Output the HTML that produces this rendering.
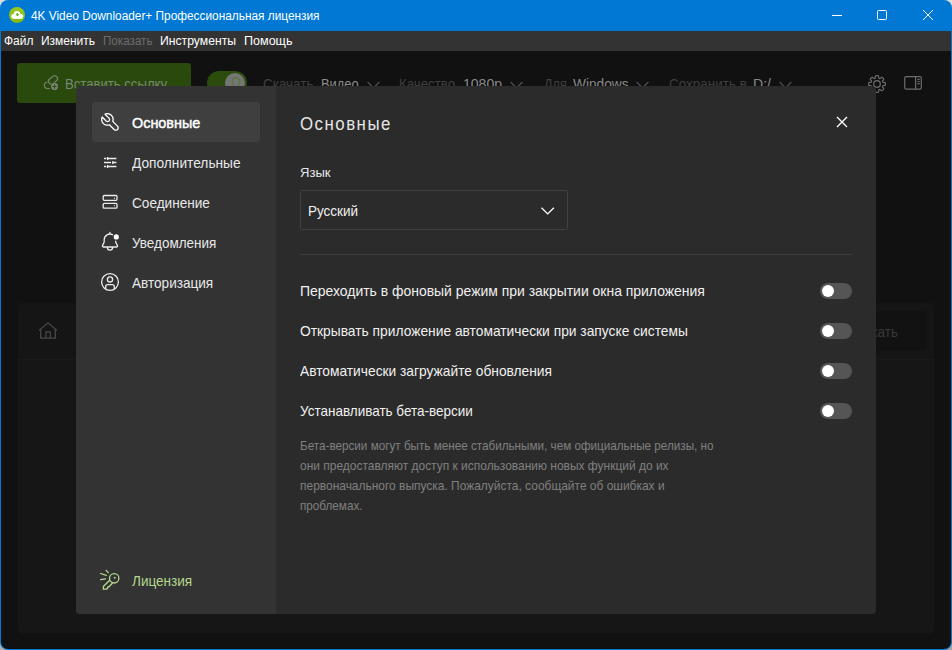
<!DOCTYPE html>
<html lang="ru">
<head>
<meta charset="utf-8">
<title>4K Video Downloader+</title>
<style>
*{box-sizing:border-box;margin:0;padding:0}
html,body{width:952px;height:650px;overflow:hidden;background:#c4c4c4}
body{font-family:"Liberation Sans",sans-serif;position:relative;color:#fff}
.abs{position:absolute}
.t{position:absolute;white-space:nowrap;line-height:1;transform-origin:0 50%}
#win{position:absolute;left:0;top:0;width:952px;height:650px;background:#0078d4;border-radius:8px;overflow:hidden}
#client{position:absolute;left:1px;top:31px;width:950px;height:618px;background:#111;border-radius:0 0 7px 7px;overflow:hidden}
#menubar{position:absolute;left:0;top:0;width:950px;height:20px;background:#333}
#panel{position:absolute;left:17px;top:272px;width:916px;height:330px;background:#161616;border-radius:3px}
#panelhead{position:absolute;left:0;top:0;width:916px;height:57px;background:#151515;border-bottom:1px solid #1a1a1a;border-radius:3px 3px 0 0}
#dialog{z-index:2;position:absolute;left:76px;top:86px;width:800px;height:528px;background:#2b2b2b;border-radius:4px;overflow:hidden}
#side{position:absolute;left:0;top:0;width:200px;height:528px;background:#333}
#sel{position:absolute;left:16px;top:16px;width:168px;height:40px;background:#3f3f3f;border-radius:3px}
.tog{position:absolute;left:744px;width:32px;height:16px;border-radius:8px;background:#555}
.tog i{position:absolute;left:2px;top:2px;width:12px;height:12px;border-radius:6px;background:#fff}
svg{position:absolute;overflow:visible}
.ic{fill:none;stroke:#ececec;stroke-width:1.3;stroke-linecap:round;stroke-linejoin:round}
.dim{fill:none;stroke:#6c6c6c;stroke-width:1.2;stroke-linecap:round;stroke-linejoin:round}
.chev{fill:none;stroke:#505050;stroke-width:1.2}
</style>
</head>
<body>
<div class="abs" style="left:0;top:0;width:10px;height:10px;background:#dcdcdc"></div><div class="abs" style="left:942px;top:0;width:10px;height:10px;background:#e4e0d6"></div><div class="abs" style="left:0;top:640px;width:10px;height:10px;background:#b2b2b2"></div><div class="abs" style="left:942px;top:640px;width:10px;height:10px;background:#a6a6a6"></div>
<div id="win">
  <!-- title bar -->
  <svg style="left:9px;top:7px" width="16" height="16" viewBox="0 0 16 16"><defs><linearGradient id="gi" x1="0" y1="0" x2="0" y2="1"><stop offset="0" stop-color="#9dcc1a"/><stop offset="1" stop-color="#80b616"/></linearGradient></defs><circle cx="8" cy="8" r="8" fill="url(#gi)"/><g fill="#fff"><circle cx="4.600" cy="9.400" r="2.450"/><circle cx="8" cy="7.300" r="3.250"/><circle cx="11.600" cy="9.300" r="2.550"/><rect x="4.600" y="9" width="7" height="2.850"/></g><path d="M8.400 6.100v3M6.900 7.600h3" stroke="#6fb51e" stroke-width="1.200" fill="none"/></svg>
  <svg style="left:832px;top:10px" width="11" height="11" viewBox="0 0 11 11"><path d="M0 5.500h10" stroke="#fff" stroke-width="1" fill="none"/></svg>
  <svg style="left:877px;top:10px" width="11" height="11" viewBox="0 0 11 11"><rect x="0.500" y="0.500" width="9" height="9" rx="1" fill="none" stroke="#fff" stroke-width="1"/></svg>
  <svg style="left:923px;top:10px" width="11" height="11" viewBox="0 0 11 11"><path d="M0 0l10 10M10 0L0 10" stroke="#fff" stroke-width="1" fill="none"/></svg>

  <div id="client">
    <div id="menubar"></div>
    <!-- toolbar (dimmed) -->
    <div class="abs" style="left:16px;top:32px;width:174px;height:40px;background:#2a490c;border-radius:3px"></div>
    <div class="abs" style="left:206px;top:40px;width:40px;height:24px;border-radius:12px;background:#2b4c0d"></div>
    <div class="abs" style="left:224px;top:42px;width:20px;height:20px;border-radius:10px;background:#757575"></div>
    <!-- content panel -->
    <div id="panel">
      <div id="panelhead"></div>
      <div class="abs" style="left:810px;top:8px;width:99px;height:40px;background:#121212;border-radius:3px"></div>
    </div>
  </div>

  <!-- background icons (page coords) -->
  <svg style="left:36px;top:66px" width="40" height="30" viewBox="0 0 40 30"><g fill="none" stroke="#74816b" stroke-width="1.200" stroke-linecap="round"><rect x="12" y="11.100" width="10" height="5.600" rx="2.800" transform="rotate(-38 17 13.900)"/><path d="M11 16C8.500 16.500 7.400 19.500 9 21.500C10.200 22.900 12 22.900 13.400 22.600"/></g><circle cx="18.500" cy="20.500" r="3.900" fill="#2a490c"/><circle cx="18.500" cy="20.500" r="3.400" fill="#84887f"/><path d="M18.500 18.300v4.400M16.300 20.500h4.400" stroke="#2a490c" stroke-width="1.200" fill="none"/></svg>
  <svg style="left:229px;top:76px" width="14" height="16" viewBox="0 0 14 16" fill="none" stroke="#537a30" stroke-width="1.100"><path d="M7 1.500a3.900 3.900 0 0 0-3 6.400L5.300 11h3.400L10 7.900A3.900 3.900 0 0 0 7 1.500z"/></svg>
  <svg style="left:367px;top:80.500px" width="14" height="9" viewBox="0 0 14 9" class="chev"><path d="M.600 1l5.900 5.900L12.400 1"/></svg>
  <svg style="left:510px;top:80.500px" width="14" height="9" viewBox="0 0 14 9" class="chev"><path d="M.600 1l5.900 5.900L12.400 1"/></svg>
  <svg style="left:636px;top:80.500px" width="14" height="9" viewBox="0 0 14 9" class="chev"><path d="M.600 1l5.900 5.900L12.400 1"/></svg>
  <svg style="left:779px;top:80.500px" width="14" height="9" viewBox="0 0 14 9" class="chev"><path d="M.600 1l5.900 5.900L12.400 1"/></svg>
  <svg style="left:876.700px;top:83.800px" width="1" height="1" viewBox="0 0 1 1" class="dim"><path d="M0.00 8.40L-0.26 8.39L-0.53 8.37L-0.79 8.35L-1.05 8.29L-1.29 8.17L-1.50 7.88L-1.63 7.30L-1.69 6.57L-1.76 6.06L-1.88 5.80L-2.04 5.66L-2.20 5.57L-2.38 5.49L-2.56 5.44L-2.77 5.43L-3.04 5.53L-3.45 5.84L-4.01 6.32L-4.51 6.64L-4.86 6.69L-5.12 6.60L-5.34 6.46L-5.55 6.29L-5.75 6.12L-5.94 5.94L-6.12 5.75L-6.29 5.55L-6.46 5.34L-6.60 5.12L-6.69 4.86L-6.64 4.51L-6.32 4.01L-5.84 3.45L-5.53 3.04L-5.43 2.77L-5.44 2.56L-5.49 2.38L-5.57 2.20L-5.66 2.04L-5.80 1.88L-6.06 1.76L-6.57 1.69L-7.30 1.63L-7.88 1.50L-8.17 1.29L-8.29 1.05L-8.35 0.79L-8.37 0.53L-8.39 0.26L-8.40 0.00L-8.39 -0.26L-8.37 -0.53L-8.35 -0.79L-8.29 -1.05L-8.17 -1.29L-7.88 -1.50L-7.30 -1.63L-6.57 -1.69L-6.06 -1.76L-5.80 -1.88L-5.66 -2.04L-5.57 -2.20L-5.49 -2.38L-5.44 -2.56L-5.43 -2.77L-5.53 -3.04L-5.84 -3.45L-6.32 -4.01L-6.64 -4.51L-6.69 -4.86L-6.60 -5.12L-6.46 -5.34L-6.29 -5.55L-6.12 -5.75L-5.94 -5.94L-5.75 -6.12L-5.55 -6.29L-5.34 -6.46L-5.12 -6.60L-4.86 -6.69L-4.51 -6.64L-4.01 -6.32L-3.45 -5.84L-3.04 -5.53L-2.77 -5.43L-2.56 -5.44L-2.38 -5.49L-2.20 -5.57L-2.04 -5.66L-1.88 -5.80L-1.76 -6.06L-1.69 -6.57L-1.63 -7.30L-1.50 -7.88L-1.29 -8.17L-1.05 -8.29L-0.79 -8.35L-0.53 -8.37L-0.26 -8.39L-0.00 -8.40L0.26 -8.39L0.53 -8.37L0.79 -8.35L1.05 -8.29L1.29 -8.17L1.50 -7.88L1.63 -7.30L1.69 -6.57L1.76 -6.06L1.88 -5.80L2.04 -5.66L2.20 -5.57L2.38 -5.49L2.56 -5.44L2.77 -5.43L3.04 -5.53L3.45 -5.84L4.01 -6.32L4.51 -6.64L4.86 -6.69L5.12 -6.60L5.34 -6.46L5.55 -6.29L5.75 -6.12L5.94 -5.94L6.12 -5.75L6.29 -5.55L6.46 -5.34L6.60 -5.12L6.69 -4.86L6.64 -4.51L6.32 -4.01L5.84 -3.45L5.53 -3.04L5.43 -2.77L5.44 -2.56L5.49 -2.38L5.57 -2.20L5.66 -2.04L5.80 -1.88L6.06 -1.76L6.57 -1.69L7.30 -1.63L7.88 -1.50L8.17 -1.29L8.29 -1.05L8.35 -0.79L8.37 -0.53L8.39 -0.26L8.40 -0.00L8.39 0.26L8.37 0.53L8.35 0.79L8.29 1.05L8.17 1.29L7.88 1.50L7.30 1.63L6.57 1.69L6.06 1.76L5.80 1.88L5.66 2.04L5.57 2.20L5.49 2.38L5.44 2.56L5.43 2.77L5.53 3.04L5.84 3.45L6.32 4.01L6.64 4.51L6.69 4.86L6.60 5.12L6.46 5.34L6.29 5.55L6.12 5.75L5.94 5.94L5.75 6.12L5.55 6.29L5.34 6.46L5.12 6.60L4.86 6.69L4.51 6.64L4.01 6.32L3.45 5.84L3.04 5.53L2.77 5.43L2.56 5.44L2.38 5.49L2.20 5.57L2.04 5.66L1.88 5.80L1.76 6.06L1.69 6.57L1.63 7.30L1.50 7.88L1.29 8.17L1.05 8.29L0.79 8.35L0.53 8.37L0.26 8.39Z"/><circle cx="0" cy="0" r="3.300"/></svg>
  <svg style="left:904px;top:76px" width="18" height="14" viewBox="0 0 18 14" class="dim"><rect x=".700" y=".600" width="16.600" height="12.600" rx="1.600"/><path d="M11.600 .600v12.600M13.400 3.400h2.300M13.400 5.500h2.300M13.400 7.600h2.300" stroke-linecap="butt"/></svg>
  <svg style="left:0;top:0" width="100" height="400" viewBox="0 0 100 400" fill="none" stroke="#4a4a4a" stroke-width="1.200" stroke-linecap="round" stroke-linejoin="round"><path d="M39.500 330L48 322.900L56.500 330M40.700 329.200V338.200H55.300V329.200M45.900 338.200V331.900H50.300V338.200"/></svg>

<div class="t" id="b1" style="left:65px;top:76px;font-size:15px;color:#7a8774;z-index:1;transform:scaleX(0.8754)">Вставить ссылку</div>
<div class="t" id="c1" style="left:263.3px;top:76px;font-size:15px;color:#3f3f3f;z-index:1;transform:scaleX(0.8960)">Скачать</div>
<div class="t" id="c2" style="left:321px;top:76px;font-size:15px;color:#8a8a8a;z-index:1;transform:scaleX(0.8602)">Видео</div>
<div class="t" id="c3" style="left:399.4px;top:76px;font-size:15px;color:#3f3f3f;z-index:1;transform:scaleX(0.8846)">Качество</div>
<div class="t" id="c4" style="left:463px;top:76px;font-size:15px;color:#8a8a8a;z-index:1;transform:scaleX(0.9348)">1080p</div>
<div class="t" id="c5" style="left:543.7px;top:76px;font-size:15px;color:#3f3f3f;z-index:1;transform:scaleX(0.8430)">Для</div>
<div class="t" id="c6" style="left:572.6px;top:76px;font-size:15px;color:#8a8a8a;z-index:1;transform:scaleX(0.9136)">Windows</div>
<div class="t" id="c7" style="left:668.6px;top:76px;font-size:15px;color:#3f3f3f;z-index:1;transform:scaleX(0.8975)">Сохранить в</div>
<div class="t" id="c8" style="left:753px;top:76px;font-size:15px;color:#8a8a8a;z-index:1;transform:scaleX(0.9389)">D:/</div>
<div class="t" id="srch" style="left:855px;top:324px;font-size:15px;color:#393939;z-index:1;transform:scaleX(0.8982)">Искать</div>

  <!-- settings dialog -->
  <div id="dialog">
    <div id="side"><div id="sel"></div></div>
    <div class="abs" style="left:224px;top:104px;width:268px;height:40px;border:1px solid #404040;border-radius:2px"></div>
    <div class="abs" style="left:224px;top:168px;width:552px;height:1px;background:#3e3e3e"></div>
    <div class="tog" style="top:197px"><i></i></div>
    <div class="tog" style="top:237px"><i></i></div>
    <div class="tog" style="top:277px"><i></i></div>
    <div class="tog" style="top:317px"><i></i></div>
  </div>

  <!-- dialog icons (page coords), above dialog -->
  <div class="abs" style="z-index:3;left:0;top:0">
  <svg style="left:96px;top:108px" width="30" height="28" viewBox="0 0 30 28" class="ic" stroke="#fff"><path d="M9.04 6.21L12.96 10.13L13.27 10.54L13.47 11.02L13.54 11.54L13.47 12.06L13.27 12.54L12.96 12.96L12.54 13.27L12.06 13.47L11.54 13.54L11.02 13.47L10.54 13.27L10.13 12.96L6.21 9.04L6.01 9.56L5.85 10.09L5.75 10.64L5.70 11.20L5.71 11.76L5.77 12.31L5.89 12.85L6.06 13.39L6.28 13.90L6.55 14.39L6.86 14.85L7.22 15.27L7.62 15.66L8.05 16.01L8.52 16.32L9.01 16.58L9.53 16.78L10.07 16.94L10.61 17.05L11.17 17.10L11.73 17.09L12.28 17.03L12.83 16.92L13.36 16.75L18.10 21.50L18.60 21.88L19.18 22.12L19.80 22.20L20.42 22.12L21.00 21.88L21.50 21.50L21.88 21.00L22.12 20.42L22.20 19.80L22.12 19.18L21.88 18.60L21.50 18.10L16.75 13.36L16.92 12.83L17.03 12.28L17.09 11.73L17.10 11.17L17.05 10.61L16.94 10.07L16.78 9.53L16.58 9.01L16.32 8.52L16.01 8.05L15.66 7.62L15.27 7.22L14.85 6.86L14.39 6.55L13.90 6.28L13.39 6.06L12.85 5.89L12.31 5.77L11.76 5.71L11.20 5.70L10.64 5.75L10.09 5.85L9.56 6.01L9.04 6.21Z" style="stroke:#fff"/></svg>
  <svg style="left:103.800px;top:156px" width="13" height="13" viewBox="0 0 13 13" class="ic" style="stroke-linecap:butt"><path stroke-linecap="butt" d="M0 2.500h2.300M3.600 .900v3.200M3.600 2.500H12.400M0 6.500h7.100M8.800 4.900v3.200M8.800 6.500H12.400M0 10.500h2.300M3.600 8.900v3.200M3.600 10.500H12.400"/></svg>
  <svg style="left:96px;top:188px" width="30" height="28" viewBox="0 0 30 28" class="ic"><rect x="7.200" y="7.500" width="13.800" height="4.800" rx="1"/><rect x="7.200" y="15.300" width="13.800" height="4.900" rx="1"/><circle cx="18.400" cy="10.200" r=".6" fill="#ececec" stroke="none"/><circle cx="18.400" cy="17.600" r=".6" fill="#ececec" stroke="none"/></svg>
  <svg style="left:96px;top:228px" width="30" height="28" viewBox="0 0 30 28" class="ic"><path d="M16.700 6.800A5.700 5.700 0 0 0 8.200 11.700V14L6.600 17.400Q6 19 7.300 19H20.700Q22 19 21.400 17.400L19.700 14.200V13.200M13.900 4.400V6M11.400 19.600a2.600 2.600 0 0 0 5.200 0"/><circle cx="20.300" cy="8.900" r="2.600" fill="#fff" stroke="none"/></svg>
  <svg style="left:96px;top:268px" width="30" height="28" viewBox="0 0 30 28" class="ic"><circle cx="14" cy="14" r="8.400"/><circle cx="14" cy="11.400" r="2.600"/><path d="M9.700 20.800V18.700a2 2 0 0 1 2-2h4.600a2 2 0 0 1 2 2V20.800"/></svg>
  <svg style="left:96px;top:566px" width="30" height="28" viewBox="0 0 30 28" class="ic" ><g style="stroke:#b5d88c"><circle cx="18.200" cy="12.300" r="4.700"/><path d="M13.700 14.300L7.300 20.500V23.200H10.600L11.700 22V20.800H13L16.300 17.200M10.200 4.500L12.300 6.600M4.600 7.500L10.300 9.400M4.600 13.700L9.500 12.800"/></g><circle cx="18.700" cy="11.700" r="1" fill="#b5d88c" stroke="none"/></svg>
  <svg style="left:837px;top:117px" width="10" height="10" viewBox="0 0 10 10"><path d="M0 0l10 10M10 0L0 10" stroke="#fff" stroke-width="1.400" fill="none"/></svg>
  <svg style="left:541px;top:207px" width="14" height="9" viewBox="0 0 14 9" fill="none" stroke="#fff" stroke-width="1.300"><path d="M.5 .700l6.200 6.200L12.900 .700"/></svg>
  </div>
<div class="t" id="title" style="left:31px;top:10px;font-size:12px;color:#fff;z-index:3;transform:scaleX(0.9872)">4K Video Downloader+ Профессиональная лицензия</div>
<div class="t" id="m1" style="left:3.6px;top:35px;font-size:12px;color:#fff;z-index:3;transform:scaleX(0.9961)">Файл</div>
<div class="t" id="m2" style="left:41px;top:35px;font-size:12px;color:#fff;z-index:3;transform:scaleX(0.9974)">Изменить</div>
<div class="t" id="m3" style="left:103px;top:35px;font-size:12px;color:#6d6d6d;z-index:3;transform:scaleX(0.9703)">Показать</div>
<div class="t" id="m4" style="left:160px;top:35px;font-size:12px;color:#fff;z-index:3;transform:scaleX(1.0157)">Инструменты</div>
<div class="t" id="m5" style="left:244px;top:35px;font-size:12px;color:#fff;z-index:3;transform:scaleX(1.0462)">Помощь</div>
<div class="t" id="s1" style="left:132.3px;top:115px;font-size:15px;color:#fff;-webkit-text-stroke:.45px #fff;z-index:3;transform:scaleX(0.9596)">Основные</div>
<div class="t" id="s2" style="left:132.3px;top:155px;font-size:15px;color:#e8e8e8;z-index:3;transform:scaleX(0.9145)">Дополнительные</div>
<div class="t" id="s3" style="left:132.3px;top:195px;font-size:15px;color:#e8e8e8;z-index:3;transform:scaleX(0.9063)">Соединение</div>
<div class="t" id="s4" style="left:132.3px;top:235px;font-size:15px;color:#e8e8e8;z-index:3;transform:scaleX(0.8988)">Уведомления</div>
<div class="t" id="s5" style="left:132.3px;top:275px;font-size:15px;color:#e8e8e8;z-index:3;transform:scaleX(0.9049)">Авторизация</div>
<div class="t" id="s6" style="left:132.3px;top:573px;font-size:15px;color:#b5d88c;z-index:3;transform:scaleX(0.9031)">Лицензия</div>
<div class="t" id="h1" style="left:300.3px;top:115px;font-size:18px;color:#e6e6e6;letter-spacing:1.6px;z-index:3;transform:scaleX(0.9357)">Основные</div>
<div class="t" id="l1" style="left:300.3px;top:166px;font-size:13.5px;color:#e8e8e8;z-index:3;transform:scaleX(0.9695)">Язык</div>
<div class="t" id="l2" style="left:307.7px;top:204px;font-size:14px;color:#f0f0f0;z-index:3;transform:scaleX(0.9643)">Русский</div>
<div class="t" id="r1" style="left:299.6px;top:283px;font-size:15px;color:#f0f0f0;z-index:3;transform:scaleX(0.9298)">Переходить в фоновый режим при закрытии окна приложения</div>
<div class="t" id="r2" style="left:299.6px;top:323px;font-size:15px;color:#f0f0f0;z-index:3;transform:scaleX(0.9199)">Открывать приложение автоматически при запуске системы</div>
<div class="t" id="r3" style="left:299.6px;top:363px;font-size:15px;color:#f0f0f0;z-index:3;transform:scaleX(0.9177)">Автоматически загружайте обновления</div>
<div class="t" id="r4" style="left:299.6px;top:403px;font-size:15px;color:#f0f0f0;z-index:3;transform:scaleX(0.8997)">Устанавливать бета-версии</div>
<div class="t" id="d1" style="left:300.2px;top:439px;font-size:13px;color:#808080;z-index:3;transform:scaleX(0.8992)">Бета-версии могут быть менее стабильными, чем официальные релизы, но</div>
<div class="t" id="d2" style="left:300.2px;top:459px;font-size:13px;color:#808080;z-index:3;transform:scaleX(0.9206)">они предоставляют доступ к использованию новых функций до их</div>
<div class="t" id="d3" style="left:300.2px;top:479px;font-size:13px;color:#808080;z-index:3;transform:scaleX(0.9199)">первоначального выпуска. Пожалуйста, сообщайте об ошибках и</div>
<div class="t" id="d4" style="left:300.2px;top:499px;font-size:13px;color:#808080;z-index:3;transform:scaleX(0.8997)">проблемах.</div>
</div>
</body>
</html>
